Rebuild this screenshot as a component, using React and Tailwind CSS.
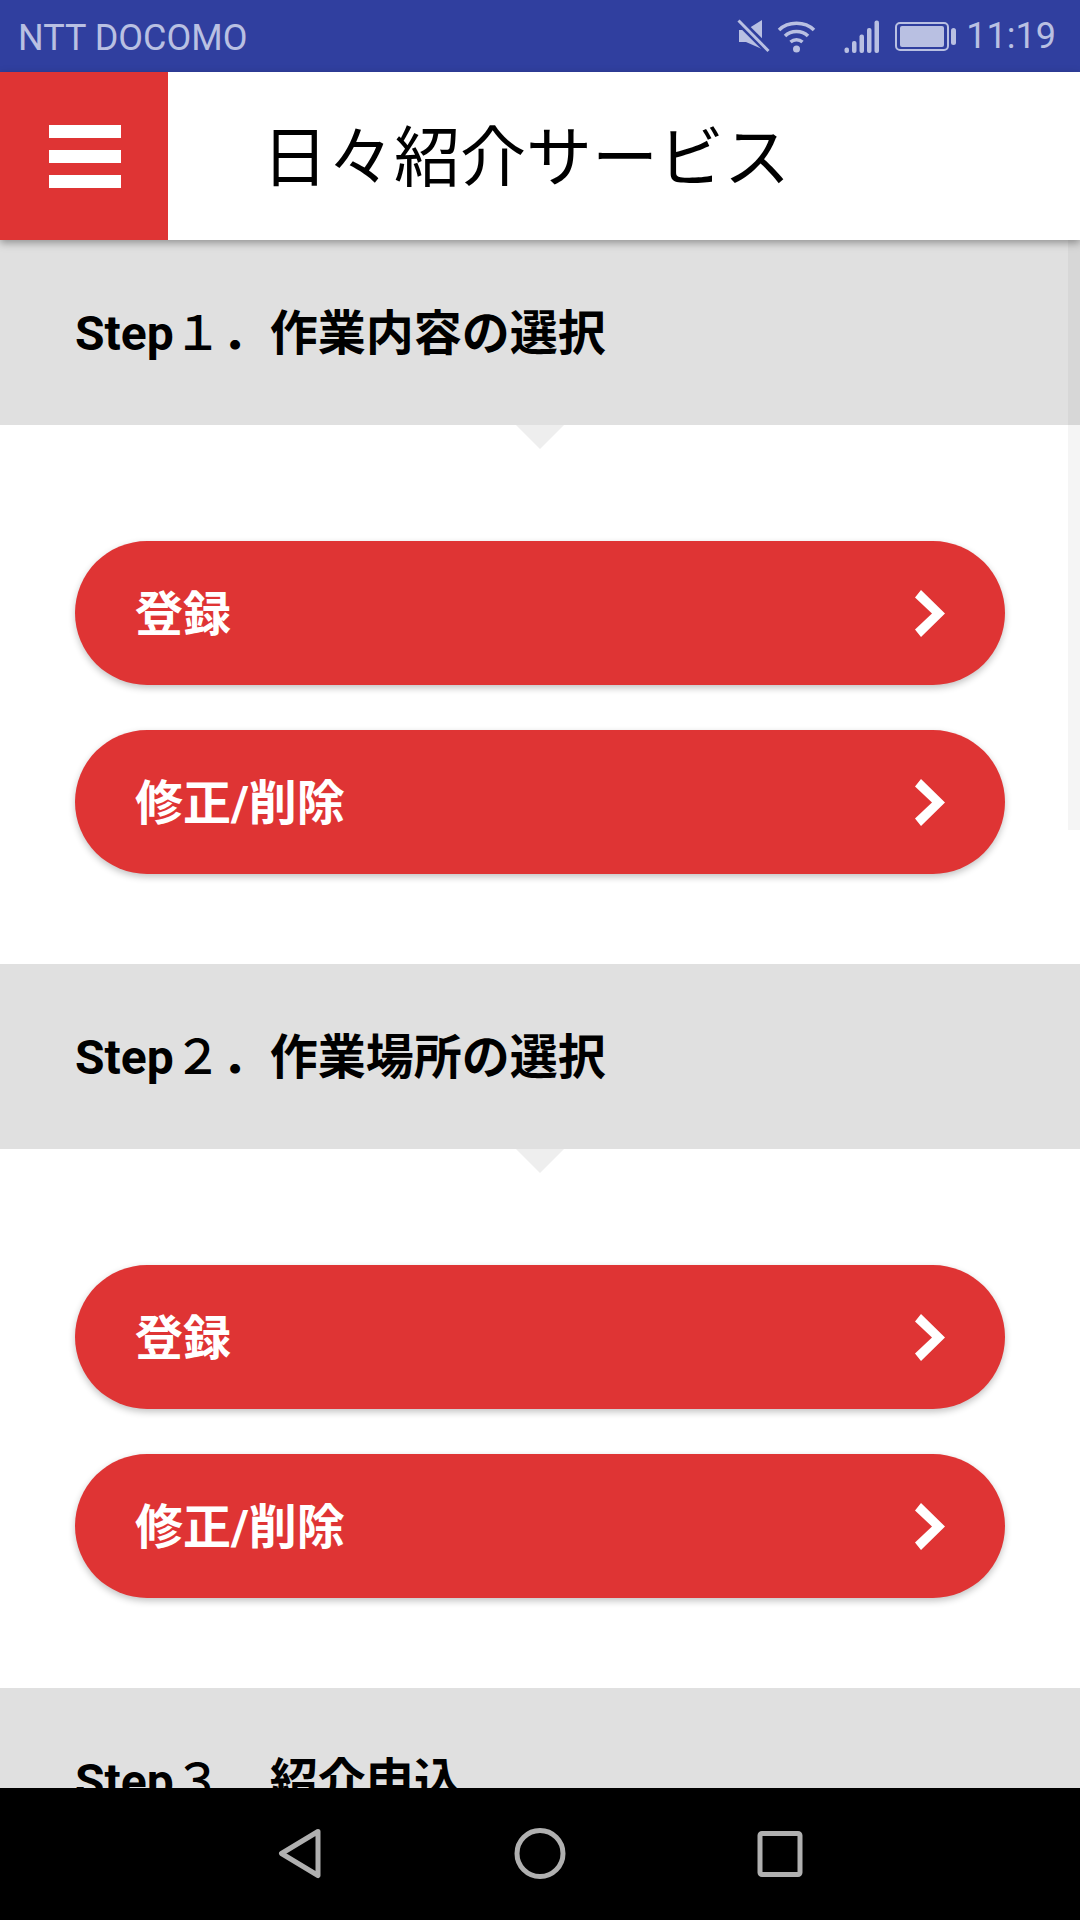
const sans = "font-['Roboto','Noto_Sans_CJK_JP',sans-serif]";

function Chevron() {
  return (
    <svg width="30" height="47" viewBox="0 0 30 47" className="block">
      <polygon points="6,0 30,23.500 6,47 0,39.500 17,23.500 0,7.500" fill="#ffffff" />
    </svg>
  );
}

function ActionButton({ label }) {
  return (
    <div className="flex h-[144px] items-center justify-between rounded-[72px] bg-[#df3434] pl-[60px] pr-[60px] shadow-[0_3px_7px_rgba(0,0,0,0.24)]">
      <span className="pt-[3px] text-[48px] font-bold leading-none text-white">{label}</span>
      <Chevron />
    </div>
  );
}

function StepHeader({ num, text }) {
  return (
    <div className="relative h-[185px] bg-[#e0e0e0] pl-[75px] pt-[62px]">
      <h2 className="text-[48px] font-bold leading-[64px] text-black">
        Step<span className="font-medium">{num}</span>．{text}
      </h2>
      <div className="absolute left-[516px] top-[185px] h-0 w-0 border-x-[24px] border-t-[24px] border-x-transparent border-t-[#eeeeee]" />
    </div>
  );
}

function Section({ num, text }) {
  return (
    <section>
      <StepHeader num={num} text={text} />
      <div className="flex flex-col gap-[45px] px-[75px] pt-[116px] pb-[90px]">
        <ActionButton label="登録" />
        <ActionButton label="修正/削除" />
      </div>
    </section>
  );
}

function StatusIcons() {
  return (
    <div className="flex items-center text-[#b9c0e2]">
      <svg width="33" height="34" viewBox="0 0 33 34" className="mr-[7px]" fill="#b9c0e2">
        <path d="M2 11 H9 L25 1 V30 L9 23 H2 Z" />
        <path d="M1 1 L32 32" stroke="#303f9f" strokeWidth="8" />
        <path d="M1.500 1.500 L31.500 32" stroke="#b9c0e2" strokeWidth="3" />
      </svg>
      <svg width="39" height="33" viewBox="0 0 39 33" className="mr-[28px]" fill="none" stroke="#b9c0e2" strokeWidth="3.500">
        <path d="M2 10 C11 1 28 1 37 10" />
        <path d="M8 16 C14 10 25 10 31 16" />
        <path d="M13.500 22 C17 19 22 19 25.500 22" />
        <circle cx="19.500" cy="29" r="3.500" fill="#b9c0e2" stroke="none" />
      </svg>
      <svg width="35" height="33" viewBox="0 0 35 33" className="mr-[16px]" fill="#b9c0e2">
        <rect x="0.500" y="27.500" width="4.500" height="5.500" rx="2" />
        <rect x="8" y="21" width="4.500" height="12" rx="2" />
        <rect x="15.500" y="14.500" width="4.500" height="18.500" rx="2" />
        <rect x="23" y="8" width="4.500" height="25" rx="2" />
        <rect x="30.500" y="0.500" width="4.500" height="32.500" rx="2" />
      </svg>
      <svg width="61" height="29" viewBox="0 0 61 29" className="mr-[10px]" fill="#b9c0e2">
        <rect x="1" y="1" width="52" height="27" rx="4" fill="none" stroke="#b9c0e2" strokeWidth="2" />
        <rect x="5" y="4" width="44" height="21" rx="2" />
        <rect x="56" y="6" width="5" height="17" rx="2.500" />
      </svg>
      <span className="text-[36px] leading-none">11:19</span>
    </div>
  );
}

export default function App() {
  return (
    <div className={`flex h-[1920px] w-[1080px] flex-col overflow-hidden bg-white ${sans}`}>
      <div className="flex h-[72px] shrink-0 items-center justify-between bg-[#303f9f] pl-[18px] pr-[24px]">
        <span className="pt-[3px] text-[36px] leading-none text-[#b9c0e2]">NTT DOCOMO</span>
        <StatusIcons />
      </div>

      <header className="relative z-10 flex h-[168px] shrink-0 items-center bg-white shadow-[0_3px_8px_rgba(0,0,0,0.35)]">
        <div className="flex h-full w-[168px] items-center bg-[#df3434] pl-[49px]">
          <div className="flex w-[72px] flex-col gap-[12px] pt-[1px]">
            <div className="h-[13px] bg-white" />
            <div className="h-[13px] bg-white" />
            <div className="h-[13px] bg-white" />
          </div>
        </div>
        <h1 className="ml-[94px] pt-[6px] text-[66px] font-normal leading-none text-black">日々紹介サービス</h1>
      </header>

      <main className="relative min-h-0 flex-1 overflow-hidden">
        <Section num="１" text="作業内容の選択" />
        <Section num="２" text="作業場所の選択" />
        <StepHeader num="３" text="紹介申込" />
        <div className="absolute right-0 top-0 h-[590px] w-[12px] bg-black/[0.04]" />
      </main>

      <nav className="flex h-[132px] shrink-0 bg-black">
        <svg width="1080" height="132" viewBox="0 0 1080 132" fill="none" stroke="#b0b0b0" strokeWidth="5" className="block">
          <path d="M318 43.500 L281.500 65.500 L318 87.500 Z" strokeLinejoin="round" />
          <circle cx="540" cy="65.500" r="23" />
          <rect x="760" y="45.500" width="40" height="41" rx="2" />
        </svg>
      </nav>
    </div>
  );
}
